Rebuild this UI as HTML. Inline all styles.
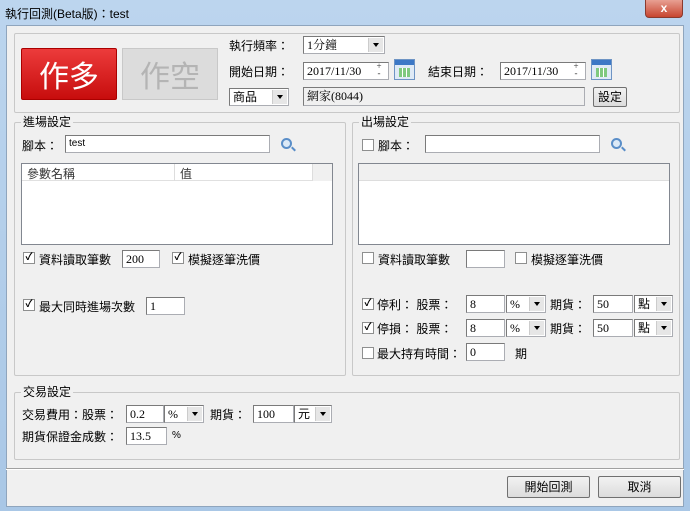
<!DOCTYPE html>
<html><head><meta charset="utf-8"><style>
*{box-sizing:border-box;margin:0;padding:0}
body{width:690px;height:511px;overflow:hidden;background:linear-gradient(#bcd5ee,#a9c7e6);font-family:"Liberation Sans","Noto Sans CJK TC",sans-serif;font-size:12px;color:#000;position:relative}
.a{position:absolute;white-space:nowrap}
.client{position:absolute;left:6px;top:25px;width:678px;height:482px;background:#f0f0f0;border:1px solid #8fa5bd}
.grp{position:absolute;border:1px solid #c8c8c8;border-radius:2px}
.grp>.t{position:absolute;top:-8px;left:6px;background:#f0f0f0;padding:0 2px;line-height:14px}
.in{position:absolute;background:#fff;border:1px solid #abadb3;border-top-color:#7a7a7a;border-left-color:#7a7a7a;height:18px;line-height:16px;padding-left:3px;font-family:"Liberation Serif","Noto Serif CJK SC",serif;font-size:12px}
.cb{position:absolute;width:12px;height:12px;border:1px solid #8e8f8f;background:#fff;font-size:10px;line-height:10px;text-align:center;font-weight:bold}
.dd{position:absolute;right:1px;top:1px;width:15px;height:14px;background:#e6e6e6;border-left:1px solid #ccc}
.dd:after{content:"";position:absolute;left:4px;top:5px;border:3.5px solid transparent;border-top:4px solid #000}
.btn{position:absolute;border:1px solid #707070;border-radius:2px;background:linear-gradient(#f2f2f2,#dcdcdc);text-align:center}
.cal{position:absolute;width:21px;height:21px;background:#dfeaf6;border:1px solid #6e94c4}
.cal:before{content:"";position:absolute;left:0;right:0;top:0;height:5px;background:#3c78c6}
.cal:after{content:"";position:absolute;left:4px;top:8px;width:11px;height:9px;background:repeating-linear-gradient(90deg,#7fc97f 0 3px,#fff 3px 4px)}
.sp{position:absolute;width:14px;height:16px;font-size:9px;line-height:7px;text-align:center;color:#333}
.mag{position:absolute;width:11px;height:11px;border:2px solid #5a8ec8;border-radius:50%;background:#dbe9f7}
.mag:after{content:"";position:absolute;left:8px;top:8px;width:5px;height:2px;background:#5a8ec8;transform:rotate(45deg)}
</style></head><body>
<div class="a" style="left:5px;top:5px">執行回測(Beta版)：test</div>
<div class="a" style="left:645px;top:0;width:38px;height:18px;background:linear-gradient(#e8a093,#c7452f);border:1px solid #8a3a2e;border-top:none;border-radius:0 0 4px 4px;color:#fff;text-align:center;font-weight:bold;line-height:16px">x</div>
<div class="client">
</div>
<div class="grp" style="left:14px;top:33px;width:666px;height:80px"></div>
<div class="a" style="left:21px;top:48px;width:96px;height:52px;background:linear-gradient(#ec3b3b,#c70d0d);border:1px solid #a00;border-radius:2px;color:#fff;font-size:30px;line-height:50px;text-align:center;font-family:'Noto Sans CJK TC',sans-serif">作多</div>
<div class="a" style="left:122px;top:48px;width:96px;height:52px;background:#dcdcdc;border:1px solid #c8c8c8;color:#b4b4b4;font-size:30px;line-height:50px;text-align:center;font-family:'Noto Sans CJK TC',sans-serif">作空</div>
<div class="a" style="left:229px;top:37px">執行頻率：</div>
<div class="in" style="left:303px;top:36px;width:82px">1分鐘<div class="dd"></div></div>
<div class="a" style="left:229px;top:63px">開始日期：</div>
<div class="in" style="left:303px;top:62px;width:86px">2017/11/30<div class="sp" style="right:2px;top:0">+<br>-</div></div>
<div class="cal" style="left:394px;top:59px"></div>
<div class="a" style="left:428px;top:63px">結束日期：</div>
<div class="in" style="left:500px;top:62px;width:86px">2017/11/30<div class="sp" style="right:2px;top:0">+<br>-</div></div>
<div class="cal" style="left:591px;top:59px"></div>
<div class="in" style="left:229px;top:88px;width:60px;font-family:'Liberation Sans','Noto Sans CJK TC',sans-serif">商品<div class="dd"></div></div>
<div class="in" style="left:303px;top:87px;width:282px;height:19px;background:#f0f0f0">網家(8044)</div>
<div class="btn" style="left:593px;top:87px;width:34px;height:20px;line-height:18px">設定</div>

<div class="grp" style="left:14px;top:122px;width:332px;height:254px"><div class="t">進場設定</div></div>
<div class="a" style="left:22px;top:137px">腳本：</div>
<div class="in" style="left:65px;top:135px;width:205px;font-size:10px;font-family:'Liberation Sans',sans-serif">test</div>
<div class="mag" style="left:281px;top:138px"></div>
<div class="a" style="left:21px;top:163px;width:312px;height:82px;background:#fff;border:1px solid #828790"></div>
<div class="a" style="left:22px;top:164px;width:290px;height:17px;background:#fff;border-bottom:1px solid #e0e0e0"></div>
<div class="a" style="left:312px;top:164px;width:20px;height:17px;background:#f0f0f0;border-left:1px solid #ddd"></div>
<div class="a" style="left:174px;top:164px;width:1px;height:17px;background:#ddd"></div>
<div class="a" style="left:27px;top:165px;color:#333">參數名稱</div>
<div class="a" style="left:180px;top:165px;color:#333">值</div>
<div class="cb" style="left:23px;top:252px">✓</div><div class="a" style="left:39px;top:251px">資料讀取筆數</div>
<div class="in" style="left:122px;top:250px;width:38px">200</div>
<div class="cb" style="left:172px;top:252px">✓</div><div class="a" style="left:188px;top:251px">模擬逐筆洗價</div>
<div class="cb" style="left:23px;top:299px">✓</div><div class="a" style="left:39px;top:298px">最大同時進場次數</div>
<div class="in" style="left:146px;top:297px;width:39px">1</div>

<div class="grp" style="left:352px;top:122px;width:328px;height:254px"><div class="t">出場設定</div></div>
<div class="cb" style="left:362px;top:139px"></div><div class="a" style="left:378px;top:137px">腳本：</div>
<div class="in" style="left:425px;top:135px;width:175px"></div>
<div class="mag" style="left:611px;top:138px"></div>
<div class="a" style="left:358px;top:163px;width:312px;height:82px;background:#fff;border:1px solid #828790"></div>
<div class="a" style="left:359px;top:164px;width:310px;height:17px;background:#f0f0f0;border-bottom:1px solid #ddd"></div>
<div class="cb" style="left:362px;top:252px"></div><div class="a" style="left:378px;top:251px">資料讀取筆數</div>
<div class="in" style="left:466px;top:250px;width:39px"></div>
<div class="cb" style="left:515px;top:252px"></div><div class="a" style="left:531px;top:251px">模擬逐筆洗價</div>
<div class="cb" style="left:362px;top:298px">✓</div><div class="a" style="left:377px;top:296px">停利：&nbsp;股票：</div>
<div class="in" style="left:466px;top:295px;width:39px">8</div>
<div class="in" style="left:506px;top:295px;width:40px">%<div class="dd"></div></div>
<div class="a" style="left:550px;top:296px">期貨：</div>
<div class="in" style="left:593px;top:295px;width:40px">50</div>
<div class="in" style="left:634px;top:295px;width:39px;font-family:'Liberation Sans','Noto Sans CJK TC',sans-serif">點<div class="dd"></div></div>
<div class="cb" style="left:362px;top:322px">✓</div><div class="a" style="left:377px;top:320px">停損：&nbsp;股票：</div>
<div class="in" style="left:466px;top:319px;width:39px">8</div>
<div class="in" style="left:506px;top:319px;width:40px">%<div class="dd"></div></div>
<div class="a" style="left:550px;top:320px">期貨：</div>
<div class="in" style="left:593px;top:319px;width:40px">50</div>
<div class="in" style="left:634px;top:319px;width:39px;font-family:'Liberation Sans','Noto Sans CJK TC',sans-serif">點<div class="dd"></div></div>
<div class="cb" style="left:362px;top:347px"></div><div class="a" style="left:377px;top:345px">最大持有時間：</div>
<div class="in" style="left:466px;top:343px;width:39px">0</div>
<div class="a" style="left:515px;top:345px">期</div>

<div class="grp" style="left:14px;top:392px;width:666px;height:68px"><div class="t">交易設定</div></div>
<div class="a" style="left:22px;top:406px">交易費用：股票：</div>
<div class="in" style="left:126px;top:405px;width:38px">0.2</div>
<div class="in" style="left:164px;top:405px;width:40px">%<div class="dd"></div></div>
<div class="a" style="left:210px;top:406px">期貨：</div>
<div class="in" style="left:253px;top:405px;width:41px">100</div>
<div class="in" style="left:294px;top:405px;width:38px;font-family:'Liberation Sans','Noto Sans CJK TC',sans-serif">元<div class="dd"></div></div>
<div class="a" style="left:22px;top:428px">期貨保證金成數：</div>
<div class="in" style="left:126px;top:427px;width:41px">13.5</div>
<div class="a" style="left:172px;top:430px;font-size:10px">%</div>
<div class="a" style="left:6px;top:468px;width:678px;height:2px;border-top:1px solid #a0a0a0;border-bottom:1px solid #fff"></div>
<div class="btn" style="left:507px;top:476px;width:83px;height:22px;line-height:20px">開始回測</div>
<div class="btn" style="left:598px;top:476px;width:83px;height:22px;line-height:20px">取消</div>
</body></html>
